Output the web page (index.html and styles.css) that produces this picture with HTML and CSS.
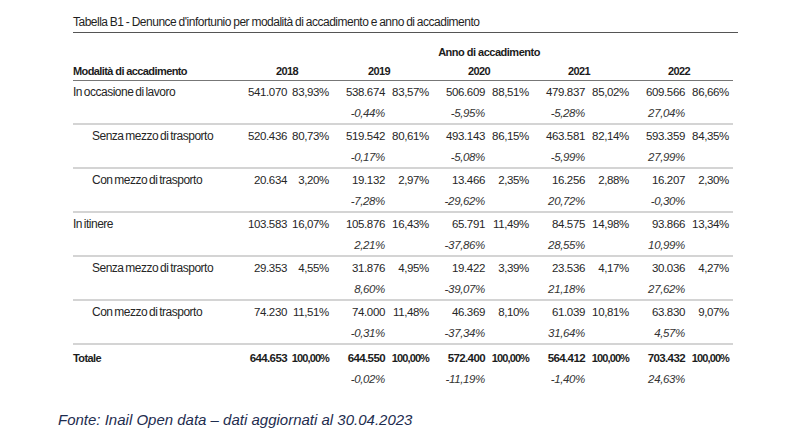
FILE: index.html
```html
<!DOCTYPE html>
<html lang="it">
<head>
<meta charset="utf-8">
<title>Tabella B1</title>
<link rel="stylesheet" href="styles.css">
</head>
<body>
<div class="page">
  <div class="sheet">
    <div class="title">Tabella B1 - Denunce d'infortunio per modalità di accadimento e anno di accadimento</div>
    <div class="anno">Anno di accadimento</div>
    <div class="row head">
      <div class="lab">Modalità di accadimento</div>
      <div class="yr">2018</div>
      <div class="yr">2019</div>
      <div class="yr">2020</div>
      <div class="yr">2021</div>
      <div class="yr">2022</div>
    </div>

    <div class="row">
      <div class="lab">In occasione di lavoro</div>
      <div class="g first"><span class="n">541.070</span><span class="p">83,93%</span></div>
      <div class="g"><span class="n">538.674</span><span class="p">83,57%</span><span class="c">-0,44%</span></div>
      <div class="g"><span class="n">506.609</span><span class="p">88,51%</span><span class="c">-5,95%</span></div>
      <div class="g"><span class="n">479.837</span><span class="p">85,02%</span><span class="c">-5,28%</span></div>
      <div class="g"><span class="n">609.566</span><span class="p">86,66%</span><span class="c">27,04%</span></div>
    </div>

    <div class="row">
      <div class="lab sub">Senza mezzo di trasporto</div>
      <div class="g first"><span class="n">520.436</span><span class="p">80,73%</span></div>
      <div class="g"><span class="n">519.542</span><span class="p">80,61%</span><span class="c">-0,17%</span></div>
      <div class="g"><span class="n">493.143</span><span class="p">86,15%</span><span class="c">-5,08%</span></div>
      <div class="g"><span class="n">463.581</span><span class="p">82,14%</span><span class="c">-5,99%</span></div>
      <div class="g"><span class="n">593.359</span><span class="p">84,35%</span><span class="c">27,99%</span></div>
    </div>

    <div class="row">
      <div class="lab sub">Con mezzo di trasporto</div>
      <div class="g first"><span class="n">20.634</span><span class="p">3,20%</span></div>
      <div class="g"><span class="n">19.132</span><span class="p">2,97%</span><span class="c">-7,28%</span></div>
      <div class="g"><span class="n">13.466</span><span class="p">2,35%</span><span class="c">-29,62%</span></div>
      <div class="g"><span class="n">16.256</span><span class="p">2,88%</span><span class="c">20,72%</span></div>
      <div class="g"><span class="n">16.207</span><span class="p">2,30%</span><span class="c">-0,30%</span></div>
    </div>

    <div class="row">
      <div class="lab">In itinere</div>
      <div class="g first"><span class="n">103.583</span><span class="p">16,07%</span></div>
      <div class="g"><span class="n">105.876</span><span class="p">16,43%</span><span class="c">2,21%</span></div>
      <div class="g"><span class="n">65.791</span><span class="p">11,49%</span><span class="c">-37,86%</span></div>
      <div class="g"><span class="n">84.575</span><span class="p">14,98%</span><span class="c">28,55%</span></div>
      <div class="g"><span class="n">93.866</span><span class="p">13,34%</span><span class="c">10,99%</span></div>
    </div>

    <div class="row">
      <div class="lab sub">Senza mezzo di trasporto</div>
      <div class="g first"><span class="n">29.353</span><span class="p">4,55%</span></div>
      <div class="g"><span class="n">31.876</span><span class="p">4,95%</span><span class="c">8,60%</span></div>
      <div class="g"><span class="n">19.422</span><span class="p">3,39%</span><span class="c">-39,07%</span></div>
      <div class="g"><span class="n">23.536</span><span class="p">4,17%</span><span class="c">21,18%</span></div>
      <div class="g"><span class="n">30.036</span><span class="p">4,27%</span><span class="c">27,62%</span></div>
    </div>

    <div class="row">
      <div class="lab sub">Con mezzo di trasporto</div>
      <div class="g first"><span class="n">74.230</span><span class="p">11,51%</span></div>
      <div class="g"><span class="n">74.000</span><span class="p">11,48%</span><span class="c">-0,31%</span></div>
      <div class="g"><span class="n">46.369</span><span class="p">8,10%</span><span class="c">-37,34%</span></div>
      <div class="g"><span class="n">61.039</span><span class="p">10,81%</span><span class="c">31,64%</span></div>
      <div class="g"><span class="n">63.830</span><span class="p">9,07%</span><span class="c">4,57%</span></div>
    </div>

    <div class="row total">
      <div class="lab">Totale</div>
      <div class="g first"><span class="n">644.653</span><span class="p">100,00%</span></div>
      <div class="g"><span class="n">644.550</span><span class="p">100,00%</span><span class="c">-0,02%</span></div>
      <div class="g"><span class="n">572.400</span><span class="p">100,00%</span><span class="c">-11,19%</span></div>
      <div class="g"><span class="n">564.412</span><span class="p">100,00%</span><span class="c">-1,40%</span></div>
      <div class="g"><span class="n">703.432</span><span class="p">100,00%</span><span class="c">24,63%</span></div>
    </div>
  </div>
  <div class="fonte">Fonte: Inail Open data – dati aggiornati al 30.04.2023</div>
</div>
</body>
</html>
```

FILE: styles.css
```css
* { box-sizing: border-box; }

html, body {
  margin: 0;
  padding: 0;
  background: #ffffff;
}

.page {
  width: 800px;
  height: 430px;
  padding-top: 12px;
}

.sheet {
  margin-left: 73px;
  width: 660px;
  font-family: "Liberation Sans", Arial, sans-serif;
  color: #262626;
}

.title {
  width: 665px;
  font-size: 12px;
  letter-spacing: -0.5px;
  word-spacing: -0.5px;
  line-height: 20px;
  height: 21px;
  border-bottom: 1px solid #555555;
  color: #1f1f1f;
  white-space: nowrap;
}

.anno {
  margin-top: 10px;
  margin-left: 172px;
  text-align: center;
  font-weight: bold;
  font-size: 11px;
  letter-spacing: -0.5px;
  line-height: 18px;
  color: #1c1c1c;
}

.row {
  display: grid;
  grid-template-columns: 172px 84px 100px 100px 100px 100px;
  padding-top: 1px;
  border-bottom: 2px solid #d4d4d4;
}

.row.head {
  margin-top: 1px;
  padding-top: 0;
  border-bottom: 1px solid #777777;
}

.row.total {
  border-bottom: none;
  padding-top: 3px;
}

.lab {
  font-size: 12px;
  letter-spacing: -0.5px;
  word-spacing: -1px;
  line-height: 21px;
  white-space: nowrap;
}

.row.head .lab,
.yr {
  font-weight: bold;
  font-size: 11px;
  letter-spacing: -0.6px;
  word-spacing: 0;
  line-height: 18px;
  color: #1c1c1c;
}

.row.total .lab {
  font-weight: bold;
  font-size: 11px;
  letter-spacing: -0.6px;
  color: #1c1c1c;
}

.yr {
  text-align: center;
}

.lab.sub {
  padding-left: 19px;
}

.g {
  display: grid;
  grid-template-columns: 56px 44px;
  grid-template-rows: 21px 20px;
  font-size: 11.5px;
  letter-spacing: -0.35px;
  line-height: 21px;
  text-align: right;
  white-space: nowrap;
}

.c {
  line-height: 20px;
  font-style: italic;
  color: #333333;
}

.g.first {
  grid-template-columns: 42px 42px;
}

.row.total .n {
  font-weight: bold;
  font-size: 11.5px;
  letter-spacing: -0.6px;
  color: #1c1c1c;
}

.row.total .p {
  font-weight: bold;
  font-size: 11px;
  letter-spacing: -0.9px;
  color: #1c1c1c;
}

.fonte {
  margin-top: 22px;
  margin-left: 58px;
  font-family: "Liberation Sans", Arial, sans-serif;
  font-style: italic;
  font-size: 15px;
  line-height: 18px;
  color: #1e2d4f;
}
```
